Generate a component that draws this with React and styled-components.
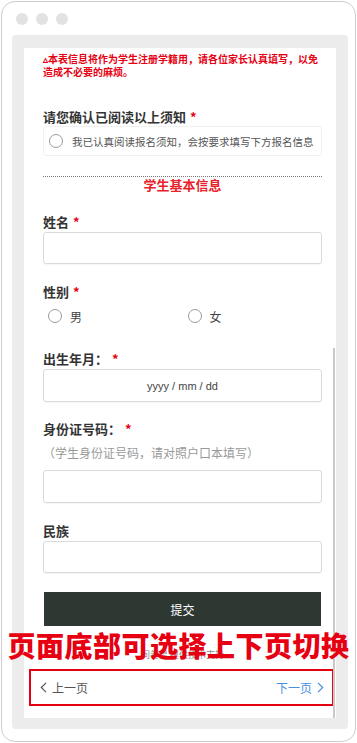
import React from 'react';
import styled, { createGlobalStyle } from 'styled-components';

const GlobalStyle = createGlobalStyle`
  html, body {
    margin: 0;
    padding: 0;
    background: #fff;
  }
  body {
    font-family: "Noto Sans CJK SC", "Noto Sans", sans-serif;
  }
  * {
    box-sizing: border-box;
  }
`;

const Frame = styled.div`
  position: relative;
  margin: 1px 0 0 1px;
  width: 355px;
  height: 741px;
  border: 1px solid #cdcdcd;
  border-radius: 14px;
  background: #fff;
  display: flex;
  flex-direction: column;
`;

const TitleBar = styled.div`
  height: 33px;
  display: flex;
  align-items: center;
  gap: 8px;
  padding-left: 14px;
`;

const Dot = styled.span`
  width: 12px;
  height: 12px;
  border-radius: 50%;
  background: #e2e2e2;
`;

const Viewport = styled.div`
  flex: 1;
  margin: 0 7px 12px 10px;
  padding: 13px 12px 11px 12px;
  background: #ececec;
  border-radius: 4px;
  display: flex;
`;

const Panel = styled.div`
  position: relative;
  flex: 1;
  background: #fff;
  overflow: hidden;
  padding: 4px 14px 0 19px;
  display: flex;
  flex-direction: column;
`;

const ScrollThumb = styled.div`
  position: absolute;
  right: 1px;
  top: 300px;
  bottom: 0;
  width: 2px;
  background: #c9c9c9;
`;

const Notice = styled.p`
  margin: 0;
  font-size: 10px;
  line-height: 13px;
  font-weight: 700;
  color: #e60012;
`;

const Label = styled.div`
  margin-top: ${p => p.$top}px;
  font-size: 13px;
  line-height: 18px;
  font-weight: 700;
  color: #333;
`;

const Star = styled.span`
  color: #e60012;
  margin-left: 4px;
`;

const OptionBox = styled.div`
  height: 30px;
  border: 1px solid #f0f0f0;
  border-radius: 3px;
  display: flex;
  align-items: center;
  gap: 9px;
  padding-left: 5px;
  font-size: 10.5px;
  white-space: nowrap;
  overflow: hidden;
  color: #555;
`;

const Radio = styled.span`
  flex-shrink: 0;
  width: 14px;
  height: 14px;
  border-radius: 50%;
  border: 1px solid #9a9a9a;
  background: #fff;
`;

const Divider = styled.div`
  margin-top: 20px;
  border-top: 1px dotted #777;
`;

const SectionTitle = styled.div`
  text-align: center;
  font-size: 13px;
  line-height: 16px;
  font-weight: 700;
  color: #e8222b;
`;

const Input = styled.div`
  margin-top: ${p => p.$top || 1}px;
  height: ${p => p.$h}px;
  border: 1px solid #dadada;
  border-radius: 3px;
  box-shadow: 0 1px 1px rgba(0, 0, 0, 0.04);
  display: flex;
  align-items: center;
  justify-content: center;
  font-family: "Liberation Sans", "Noto Sans", sans-serif;
  font-size: 11px;
  color: #444;
`;

const RadioRow = styled.div`
  margin-top: 6px;
  height: 18px;
  display: grid;
  grid-template-columns: 1fr 1fr;
`;

const RadioItem = styled.label`
  display: flex;
  align-items: center;
  gap: 8px;
  padding-left: 5px;
  font-size: 12px;
  color: #444;
`;

const Hint = styled.div`
  margin-top: 6px;
  font-size: 12px;
  line-height: 18px;
  color: #999;
`;

const SubmitButton = styled.button`
  margin: 19px 1px 0 1px;
  height: 34px;
  border: none;
  background: #2e3832;
  color: #fff;
  font-family: inherit;
  font-size: 12px;
`;

const Footer = styled.div`
  margin-top: 22px;
  text-align: center;
  font-size: 9px;
  line-height: 14px;
  color: #888;
`;

const Pager = styled.div`
  margin: 7px -12px 0 -14px;
  height: 37px;
  border: 2px solid #e60012;
  display: flex;
  align-items: center;
  justify-content: space-between;
  padding: 0 8px 0 9px;
  font-size: 12px;
`;

const PageLink = styled.span`
  display: flex;
  align-items: center;
  gap: 5px;
  color: ${p => (p.$next ? '#4a8fdf' : '#555')};
`;

const Caption = styled.div`
  position: absolute;
  left: 0;
  right: 0;
  top: 626px;
  text-align: center;
  font-size: 28px;
  line-height: 34px;
  font-weight: 900;
  color: #e60012;
  letter-spacing: 0.5px;
`;

const Chevron = ({ dir }) => (
  <svg width="7" height="11" viewBox="0 0 7 11">
    <path
      d={dir === 'left' ? 'M6 0.8 L1.3 5.5 L6 10.2' : 'M1 0.8 L5.7 5.5 L1 10.2'}
      fill="none"
      stroke="currentColor"
      strokeWidth="1.2"
    />
  </svg>
);

export default function App() {
  return (
    <>
      <GlobalStyle />
      <Frame>
        <TitleBar>
          <Dot />
          <Dot />
          <Dot />
        </TitleBar>
        <Viewport>
          <Panel>
            <Notice>
              ▵本表信息将作为学生注册学籍用，请各位家长认真填写，以免造成不必要的麻烦。
            </Notice>

            <Label $top={30}>请您确认已阅读以上须知<Star>*</Star></Label>
            <OptionBox>
              <Radio />
              我已认真阅读报名须知，会按要求填写下方报名信息
            </OptionBox>

            <Divider />
            <SectionTitle>学生基本信息</SectionTitle>

            <Label $top={20}>姓名<Star>*</Star></Label>
            <Input $h={32} />

            <Label $top={19}>性别<Star>*</Star></Label>
            <RadioRow>
              <RadioItem><Radio />男</RadioItem>
              <RadioItem><Radio />女</RadioItem>
            </RadioRow>

            <Label $top={25}>出生年月：<Star>*</Star></Label>
            <Input $h={33}>yyyy / mm / dd</Input>

            <Label $top={18}>身份证号码：<Star>*</Star></Label>
            <Hint>（学生身份证号码，请对照户口本填写）</Hint>
            <Input $h={33} $top={8} />

            <Label $top={19}>民族</Label>
            <Input $h={32} />

            <SubmitButton>提交</SubmitButton>

            <Footer>问卷星 提供技术支持</Footer>

            <Pager>
              <PageLink><Chevron dir="left" />上一页</PageLink>
              <PageLink $next>下一页<Chevron dir="right" /></PageLink>
            </Pager>

            <ScrollThumb />
          </Panel>
        </Viewport>
        <Caption>页面底部可选择上下页切换</Caption>
      </Frame>
    </>
  );
}
